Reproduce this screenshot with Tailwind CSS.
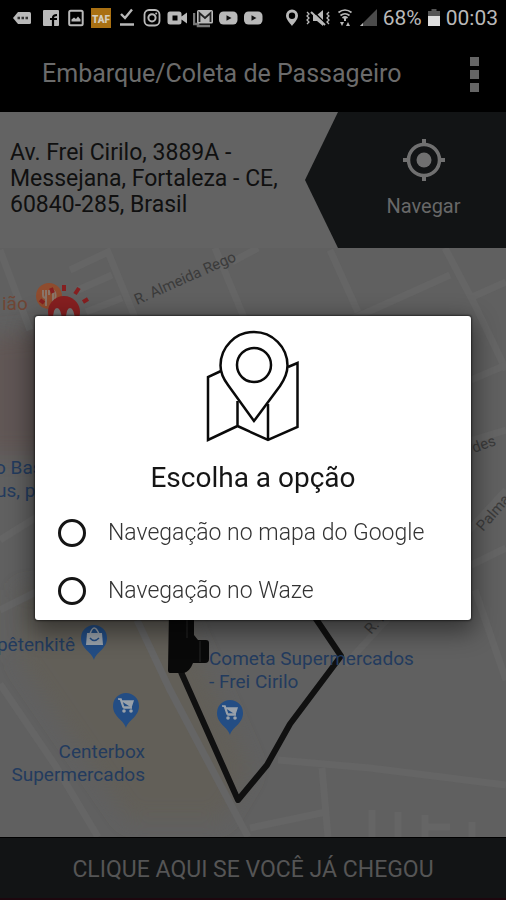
<!DOCTYPE html>
<html lang="pt-BR">
<head>
<meta charset="utf-8">
<meta name="viewport" content="width=device-width, initial-scale=1">
<title>Embarque/Coleta de Passageiro</title>
<script src="https://cdn.jsdelivr.net/npm/@tailwindcss/browser@4"></script>
</head>
<body class="bg-black font-[Roboto,sans-serif]">
<div class="flex min-h-screen flex-col overflow-hidden">

  <!-- Status bar -->
  <div class="flex h-9 items-center justify-between pr-2 pl-3 text-[#b9b9b9]">
    <div class="flex items-center gap-[5px]">
      <svg class="h-5 w-6" viewBox="0 0 24 20"><path d="M6 4h11.500q1.500 0 1.500 1.500v9q0 1.500-1.500 1.500H6L1 10z" fill="currentColor"/><path d="M5.500 10h2.500M9.500 10H12M13.500 10H16" stroke="#333" stroke-width="2.500"/></svg>
      <svg class="h-5 w-5" viewBox="0 0 20 20"><rect x="2" y="2" width="16" height="16" rx="1" fill="currentColor"/><path d="M12 18v-8q0-3 4-3M9 11h7" fill="none" stroke="#000" stroke-width="2.200"/></svg>
      <svg class="h-5 w-5" viewBox="0 0 20 20"><rect x="3.200" y="2.800" width="13.500" height="14.500" rx="1.500" fill="none" stroke="currentColor" stroke-width="2"/><path d="M5.500 13.500v-2l2.500-2 2 1.500 2-2.500 2.500 3v2z" fill="currentColor"/></svg>
      <svg class="h-5 w-5" viewBox="0 0 20 20"><rect width="20" height="20" fill="#a97012"/><text x="10" y="15" text-anchor="middle" font-family="Roboto,sans-serif" font-weight="900" font-size="10" fill="#d5cdbd">TAF</text></svg>
      <svg class="h-5 w-5" viewBox="0 0 20 20"><path d="M5 6l4 4 7-8.500M4 16.500h14" fill="none" stroke="currentColor" stroke-width="2.400"/></svg>
      <svg class="h-5 w-5" viewBox="0 0 20 20"><rect x="3.500" y="2" width="15" height="15.500" rx="4.500" fill="none" stroke="currentColor" stroke-width="1.800"/><circle cx="11" cy="9.800" r="3.600" fill="none" stroke="currentColor" stroke-width="2"/><circle cx="15.200" cy="5.500" r="1" fill="currentColor"/></svg>
      <svg class="h-5 w-[22px]" viewBox="0 0 22 20"><path fill-rule="evenodd" d="M4 3.500h9q2.500 0 2.500 2.500v2.500L21 4.500v11l-5.500-4V14q0 2.500-2.500 2.500H4q-2.500 0-2.500-2.500V6q0-2.500 2.500-2.500zM6.500 7.500v5h5v-5z" fill="currentColor"/></svg>
      <svg class="h-5 w-5" viewBox="0 0 20 20"><path d="M1 5v11h4v2h12" fill="none" stroke="#777" stroke-width="2.500"/><rect x="4" y="2" width="16" height="13.500" rx="1.500" fill="currentColor"/><path d="M6.500 14V5l5.500 5 5.500-5v9" fill="none" stroke="#222" stroke-width="1.800"/></svg>
      <svg class="h-5 w-5" viewBox="0 0 20 20"><rect x="1" y="3.500" width="18.500" height="13" rx="4.500" fill="currentColor"/><path d="M8.500 7.300l5 2.700-5 2.700z" fill="#111"/></svg>
      <svg class="h-5 w-5" viewBox="0 0 20 20"><rect x="1" y="3.500" width="18.500" height="13" rx="4.500" fill="currentColor"/><path d="M8.500 7.300l5 2.700-5 2.700z" fill="#111"/></svg>
    </div>
    <div class="flex items-center gap-1.5">
      <svg class="h-5 w-3.5" viewBox="0 0 14 20"><path fill-rule="evenodd" d="M7 1.500a6 6 0 0 1 6 6c0 4-4 7.500-6 10.500-2-3-6-6.500-6-10.500a6 6 0 0 1 6-6zm0 3a3.200 3.200 0 1 0 0 6.400 3.200 3.200 0 0 0 0-6.400z" fill="currentColor"/></svg>
      <svg class="h-5 w-[26px]" viewBox="0 0 26 20"><path d="M8 7h4l6-5v16l-6-5H8z" fill="currentColor"/><path d="M7 2l14 14" stroke="#000" stroke-width="1.500"/><path d="M6 4l14 13" stroke="currentColor" stroke-width="2"/><path d="M2 4l2 2-2 2 2 2-2 2 2 2-2 2M24 4l-2 2 2 2-2 2 2 2-2 2 2 2" fill="none" stroke="currentColor" stroke-width="1.300"/></svg>
      <svg class="h-5 w-4" viewBox="0 0 16 20"><path d="M1.500 4.500q6.500-5 13 0M3.500 7.500q4.500-3.500 9 0M5.500 10q2.500-2 5 0" fill="none" stroke="currentColor" stroke-width="1.700"/><path d="M8 9v4" stroke="currentColor" stroke-width="2"/><path d="M3 14h4l-2 4zM9 18l2-4 2 4z" fill="currentColor"/></svg>
      <svg class="h-5 w-[18px]" viewBox="0 0 18 20"><path d="M18 1v17H1z" fill="#4b4b4b"/><path d="M1 18l3-3v3z" fill="currentColor"/></svg>
      <span class="text-[21px] leading-6">68%</span>
      <svg class="h-5 w-3" viewBox="0 0 12 20"><path d="M0 3h3.500V1h5v2H12v5H0z" fill="#555"/><path d="M0 8h12v10H0z" fill="#dedede"/></svg>
      <span class="text-[21px] leading-6">00:03</span>
    </div>
  </div>

  <!-- App bar -->
  <header class="flex h-[76px] items-center justify-between pr-5 pl-[42px]">
    <h1 class="text-[25px] leading-8 text-[#6b6b6b]">Embarque/Coleta de Passageiro</h1>
    <button type="button" aria-label="Mais opções" class="flex w-6 flex-col items-center gap-1">
      <span class="size-[9px] bg-[#656565]"></span>
      <span class="size-[9px] bg-[#656565]"></span>
      <span class="size-[9px] bg-[#656565]"></span>
    </button>
  </header>

  <!-- Address and navigation -->
  <section class="flex h-[136px] bg-[#636363]">
    <p class="flex-1 pt-7 pl-2.5 text-[23px] leading-[26px] text-[#101010]">Av. Frei Cirilo, 3889A -<br>Messejana, Fortaleza - CE,<br>60840-285, Brasil</p>
    <button type="button" class="flex w-[201px] flex-col items-center gap-2.5 bg-[#121415] pt-6 pl-9 text-xl leading-6 text-[#686868] [clip-path:polygon(0_50%,33px_0,100%_0,100%_100%,33px_100%)]">
      <svg class="h-12 w-12" viewBox="0 0 48 48" fill="none" stroke="#707070"><circle cx="24" cy="24" r="15.500" stroke-width="3.500"/><circle cx="24" cy="24" r="7.500" fill="#707070" stroke="none"/><path d="M24 3v6M24 39v6M3 24h6M39 24h6" stroke-width="4"/></svg>
      <span>Navegar</span>
    </button>
  </section>

  <!-- Map -->
  <main class="min-h-0 flex-1 overflow-hidden bg-[#606060]">
    <svg class="h-[589px] min-w-full" viewBox="0 248 506 589" preserveAspectRatio="xMinYMin slice" font-family="Roboto,sans-serif" role="img" aria-label="Mapa">
      <defs>
        <filter id="soft" x="-20%" y="-20%" width="140%" height="140%"><feGaussianBlur stdDeviation="10"/></filter>
        <g id="pin"><path d="M0 23c-2-8-13-11-13-22a13 13 0 0 1 26 0c0 11-11 14-13 22z" fill="#234d84"/></g>
        <g id="cart"><path d="M-8-6h3l3 9h8M-5-4H7L5 2h-8z" fill="#99a1aa" stroke="#99a1aa" stroke-width="1.500"/><circle cx="-2" cy="6" r="1.800" fill="#99a1aa"/><circle cx="5" cy="6" r="1.800" fill="#99a1aa"/></g>
      </defs>
      <rect y="248" width="506" height="589" fill="#606060"/>
      <path d="M-20 338L60 330V455H-20z" fill="#605654" filter="url(#soft)"/>
      <path d="M20 590H170L250 770 220 820H130L20 660z" fill="#625f58" filter="url(#soft)"/>
      <g fill="none" stroke="#656565" stroke-width="7">
        <path d="M0 250L30 330M70 270L108 252L138 325M78 290L112 275M86 312L122 298M215 248L245 320M232 262L258 248"/>
        <path d="M330 250L358 312M350 320L450 275M445 248L475 305L506 370M470 298L506 282"/>
        <path d="M471 380L506 365M440 450L506 430M345 665L506 490M471 565L506 548M475 590L506 680M0 540L40 515M0 610L40 590"/>
        <path d="M0 684L55 765L98 837M137 620L170 690L248 837M278 760L370 768L506 785M322 768L328 837M250 828L326 812M372 810V837M398 812V837M425 815V837M428 827H450M472 822V837"/>
      </g>
      <g font-size="16" fill="#3b3b3b">
        <text transform="translate(137 305) rotate(-24)" font-size="15">R. Almeida Rego</text>
        <text transform="translate(474 453) rotate(-20)" font-size="15">des</text>
        <text transform="translate(483 532) rotate(-49)" font-size="15">Palmas</text>
        <text transform="translate(371 635) rotate(-48)" font-size="15">R. F</text>
      </g>
      <text x="2" y="310" font-size="19" fill="#704635">ião</text>
      <circle cx="49" cy="296" r="13" fill="#8f4c2e"/>
      <path d="M43 290v5q0 3 3 3v8M46 290v8M49 290v5M53 306V290q4 3 2 9" fill="none" stroke="#8a7569" stroke-width="2"/>
      <circle cx="64" cy="312" r="16" fill="#861f20"/>
      <path d="M53 320q0-12 4-12t5 12zM66 320q0-12 4-12t5 12z" fill="#777"/>
      <path d="M40 300l4 3M51 288l2 5M64 285v6M79 288l-4 6M88 299l-5 3" stroke="#861f20" stroke-width="4"/>
      <g font-size="19" fill="#233b5e">
        <text x="-5" y="474">o Bas</text>
        <text x="-4" y="497">us, p</text>
        <text x="75" y="651" text-anchor="end">pêtenkitê</text>
        <text x="145" y="758" text-anchor="end">Centerbox</text>
        <text x="145" y="781" text-anchor="end">Supermercados</text>
      </g>
      <use href="#pin" x="94" y="637"/>
      <path d="M87 633h15l1 12H86z" fill="#99a1aa"/><path d="M90 634q4-12 9 0" fill="none" stroke="#99a1aa" stroke-width="1.500"/><path d="M90 638q4 5 9 0" fill="none" stroke="#234d84" stroke-width="1.500"/>
      <use href="#pin" x="126" y="705"/><use href="#cart" x="126" y="705"/>
      <use href="#pin" x="230" y="712"/><use href="#cart" x="230" y="712"/>
      <path d="M181 672L238 800L267 765L290 724L341 656L314 616" fill="none" stroke="#101010" stroke-width="6" stroke-linejoin="round"/>
      <path d="M169 610h25v25l4 5h8q3 0 3 3v16q0 4-4 4h-12q-3 8-9 10h-14q-2 0-2-3z" fill="#090909"/>
      <path d="M187 620v18M200 641v21" stroke="#292929" stroke-width="1"/>
      <g font-size="19" fill="#233b5e"><text x="209" y="665">Cometa Supermercados</text><text x="209" y="688">- Frei Cirilo</text></g>
    </svg>
  </main>

  <footer class="border-t border-black bg-[#121415]">
    <button type="button" class="h-[60px] w-full pt-1 text-[23px] text-[#555]">CLIQUE AQUI SE VOCÊ JÁ CHEGOU</button>
    <div class="h-0.5 bg-[#1d070e]"></div>
  </footer>
</div>

<!-- Option dialog -->
<div class="fixed inset-x-0 top-9 bottom-0 flex items-center justify-center px-[35px]">
  <form role="dialog" aria-labelledby="choice-title" class="w-full max-w-lg rounded-[3px] bg-white shadow-[0_8px_24px_4px_rgba(0,0,0,0.45),0_0_2px_1px_rgba(0,0,0,0.5)]">
    <svg class="mx-auto mt-3 h-[116px] w-24" viewBox="206 328 96 116" fill="none" stroke="#0a0a0a" stroke-width="2.500" aria-hidden="true">
      <path d="M222 371L209 377V440L238.500 426L269 440L298.500 427V363L289 367M238.500 401V426M269 404V440"/>
      <path d="M255 421L229 385Q221.500 375 221.500 365.500A33.500 33.500 0 0 1 288.500 365.500Q288.500 375 281 386z"/>
      <circle cx="255" cy="365" r="17"/>
    </svg>
    <h2 id="choice-title" class="mt-4 text-center text-[28px] leading-9 text-[#151515]">Escolha a opção</h2>
    <div class="mt-2 flex flex-col text-[23px] font-light text-[#333]">
      <label class="flex h-[58px] items-center gap-[22px] pl-[23px]">
        <input type="radio" name="map-app" class="size-7 shrink-0 appearance-none rounded-full border-[3px] border-[#151515] bg-white checked:bg-[#151515]">
        <span>Navegação no mapa do Google</span>
      </label>
      <label class="flex h-[58px] items-center gap-[22px] pl-[23px]">
        <input type="radio" name="map-app" class="size-7 shrink-0 appearance-none rounded-full border-[3px] border-[#151515] bg-white checked:bg-[#151515]">
        <span>Navegação no Waze</span>
      </label>
    </div>
  </form>
</div>
</body>
</html>
